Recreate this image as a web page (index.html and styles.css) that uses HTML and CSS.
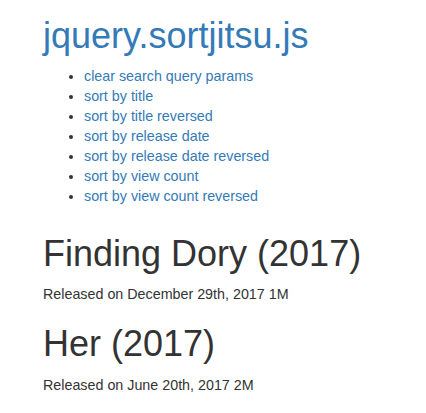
FILE: index.html
```html
<!DOCTYPE html>
<html lang="en">
<head>
    <meta charset="UTF-8">
    <title>jquery.sortjitsu.js</title>
    <link rel="stylesheet" href="styles.css">
</head>
<body>
    <div class="container">
        <h1><a href="#">jquery.sortjitsu.js</a></h1>
        <ul class="sort-links">
            <li><a href="#">clear search query params</a></li>
            <li><a href="#">sort by title</a></li>
            <li><a href="#">sort by title reversed</a></li>
            <li><a href="#">sort by release date</a></li>
            <li><a href="#">sort by release date reversed</a></li>
            <li><a href="#">sort by view count</a></li>
            <li><a href="#">sort by view count reversed</a></li>
        </ul>

        <div class="movies">
            <div class="movie">
                <h1>Finding Dory (2017)</h1>
                <p>Released on December 29th, 2017 <span class="views">1M</span></p>
            </div>
            <div class="movie">
                <h1>Her (2017)</h1>
                <p>Released on June 20th, 2017 <span class="views">2M</span></p>
            </div>
        </div>
    </div>
</body>
</html>
```

FILE: styles.css
```css
body {
    font-family: "Liberation Sans", Arial, sans-serif;
    font-size: 14.3px;
    line-height: 20px;
    color: #333;
    background-color: #fff;
    margin: 0;
}
.container {
    padding: 0 15px 0 43px;
}
a {
    color: #337ab7;
    text-decoration: none;
}
h1 {
    font-size: 36px;
    font-weight: 500;
    line-height: 1.1;
    margin: 20px 0 10px;
}
.container > h1 {
    margin-top: 16px;
}
.sort-links {
    margin: 0 0 10px;
    padding-left: 41px;
}
.movies {
    margin-top: 28px;
}
.movie h1 {
    margin-bottom: 11px;
}
.movie p {
    margin: 0 0 10px;
}
```
